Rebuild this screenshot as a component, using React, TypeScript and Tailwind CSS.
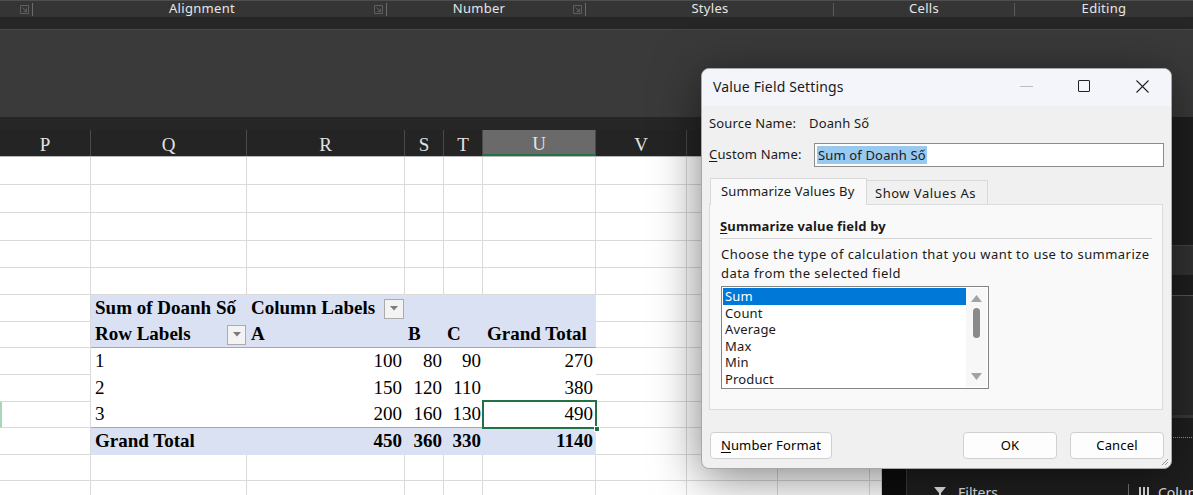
import React from "react"

const cols = [
  { id: "P", w: "w-[91px]" },
  { id: "Q", w: "w-[156px]" },
  { id: "R", w: "w-[158px]" },
  { id: "S", w: "w-[39px]" },
  { id: "T", w: "w-[39px]" },
  { id: "U", w: "w-[113px]" },
  { id: "V", w: "w-[91px]" },
  { id: "W", w: "w-[91px]" },
  { id: "X", w: "w-[92px]" },
  { id: "Y", w: "w-[12px]" },
]

const rowHeights = [
  "h-[28px]", "h-[28px]", "h-[28px]", "h-[27px]", "h-[27px]", "h-[27px]", "h-[26px]",
  "h-[27px]", "h-[27px]", "h-[26px]", "h-[27px]", "h-[26px]", "h-[27px]",
]

const pivotData = [
  { label: "1", a: 100, b: 80, c: 90, t: 270 },
  { label: "2", a: 150, b: 120, c: 110, t: 380 },
  { label: "3", a: 200, b: 160, c: 130, t: 490 },
]

function Launcher() {
  return (
    <svg width="9" height="9" viewBox="0 0 9 9" className="shrink-0">
      <path d="M0.5 0.5h8v8h-8z" fill="none" stroke="#5e5e5e" />
      <path d="M2.5 2.5l4 4M6.5 3.5v3h-3" fill="none" stroke="#5e5e5e" />
    </svg>
  )
}

function Ribbon() {
  return (
    <div className="h-[117px] flex flex-col">
      <div className="h-[17px] flex bg-[#353535] border-t border-[#4e4e4e] text-[13px] leading-[14px] tracking-[0.3px] text-[#e6e6e6] font-['Noto_Sans',sans-serif]">
        <div className="w-[34px] flex items-center justify-end gap-[3px] pr-[1px]">
          <Launcher />
          <div className="w-px h-[13px] bg-[#6a6a6a]" />
        </div>
        <div className="w-[354px] flex items-center">
          <div className="flex-1 text-center pr-[4px] -mt-[2px]">Alignment</div>
          <Launcher />
          <div className="w-px h-[13px] bg-[#6a6a6a] ml-[3px] mr-[1px]" />
        </div>
        <div className="w-[199px] flex items-center">
          <div className="flex-1 text-center pr-[3px] -mt-[2px]">Number</div>
          <Launcher />
          <div className="w-px h-[13px] bg-[#6a6a6a] ml-[3px] mr-[1px]" />
        </div>
        <div className="w-[247px] flex items-center">
          <div className="flex-1 text-center -mt-[2px]">Styles</div>
          <div className="w-px h-[13px] bg-[#5a5a5a]" />
        </div>
        <div className="w-[181px] flex items-center">
          <div className="flex-1 text-center -mt-[2px]">Cells</div>
          <div className="w-px h-[13px] bg-[#5a5a5a]" />
        </div>
        <div className="flex-1 flex items-center">
          <div className="flex-1 text-center -mt-[2px]">Editing</div>
        </div>
      </div>
      <div className="h-[13px] bg-[#262626] border-b border-[#474747]" />
      <div className="flex-1 bg-[#3a3a3a]" />
    </div>
  )
}

function Dropdown({ size }: { size: string }) {
  return (
    <div className={`${size} shrink-0 border border-[#ababab] bg-[#f3f3f3] flex items-center justify-center`}>
      <svg width="8" height="5" viewBox="0 0 8 5">
        <path d="M0 0h8L4 4.5z" fill="#7b7b7b" />
      </svg>
    </div>
  )
}

function PivotRow({ idx }: { idx: number }) {
  const base = "flex shrink-0 w-[505px] font-['Liberation_Serif',serif] text-[19px] text-black"
  const cell = "h-full flex items-center shrink-0 whitespace-nowrap"
  if (idx === 5) {
    return (
      <div className={`${base} bg-[#d9e1f2] font-bold`}>
        <div className={`${cell} w-[156px] pl-[4px]`}>Sum of Doanh Số</div>
        <div className={`${cell} w-[158px] pl-[4px] pr-[1px] justify-between`}>
          <span>Column Labels</span>
          <Dropdown size="w-[20px] h-[20px]" />
        </div>
        <div className="flex-1" />
      </div>
    )
  }
  if (idx === 6) {
    return (
      <div className={`${base} bg-[#d9e1f2] font-bold border-b border-[#8ea9db]`}>
        <div className={`${cell} w-[156px] pl-[4px] pr-[1px] justify-between`}>
          <span>Row Labels</span>
          <Dropdown size="w-[19px] h-[20px]" />
        </div>
        <div className={`${cell} w-[158px] pl-[4px]`}>A</div>
        <div className={`${cell} w-[39px] pl-[3px]`}>B</div>
        <div className={`${cell} w-[39px] pl-[3px]`}>C</div>
        <div className={`${cell} w-[113px] pl-[4px]`}>Grand Total</div>
      </div>
    )
  }
  if (idx >= 7 && idx <= 9) {
    const d = pivotData[idx - 7]
    return (
      <div className={`${base} bg-white ${idx === 9 ? "border-b border-[#8ea9db]" : ""}`}>
        <div className={`${cell} w-[156px] pl-[4px]`}>{d.label}</div>
        <div className={`${cell} w-[158px] pr-[3px] justify-end`}>{d.a}</div>
        <div className={`${cell} w-[39px] pr-[2px] justify-end`}>{d.b}</div>
        <div className={`${cell} w-[39px] pr-[2px] justify-end`}>{d.c}</div>
        <div className={`${cell} relative w-[113px] pr-[3px] justify-end`}>
          {d.t}
          {idx === 9 && (
            <div className="absolute left-[-1px] top-[-2px] w-[115px] h-[29px] border-2 border-[#217346]">
              <div className="absolute right-[-5px] bottom-[-5px] w-[6px] h-[6px] bg-[#217346] border border-white" />
            </div>
          )}
        </div>
      </div>
    )
  }
  return (
    <div className={`${base} bg-[#d9e1f2] font-bold`}>
      <div className={`${cell} w-[156px] pl-[4px]`}>Grand Total</div>
      <div className={`${cell} w-[158px] pr-[3px] justify-end`}>450</div>
      <div className={`${cell} w-[39px] pr-[2px] justify-end`}>360</div>
      <div className={`${cell} w-[39px] pr-[2px] justify-end`}>330</div>
      <div className={`${cell} w-[113px] pr-[3px] justify-end`}>1140</div>
    </div>
  )
}

function Sheet() {
  return (
    <div className="w-[882px] shrink-0 flex flex-col bg-white">
      <div className="h-[13px] bg-[#262626]" />
      <div className="flex h-[27px] bg-[#242424] border-b border-[#b8b8b8] font-['Liberation_Serif',serif] text-[19px] text-[#e2e2e2]">
        {cols.map((c) => (
          <div
            key={c.id}
            className={`${c.w} shrink-0 flex items-center justify-center pt-[4px] border-r border-[#4a4a4a] ${
              c.id === "U" ? "bg-[#6a6a6a] border-b-2 border-b-[#217346]" : ""
            }`}
          >
            {c.id}
          </div>
        ))}
      </div>
      {rowHeights.map((h, idx) => {
        const pivot = idx >= 5 && idx <= 10
        return (
          <div key={idx} className={`${h} flex shrink-0`}>
            <div
              className={`w-[91px] shrink-0 border-r border-b border-[#dadada] ${
                idx === 9 ? "border-l-2 border-l-[#a7d7b5]" : ""
              }`}
            />
            {pivot ? (
              <PivotRow idx={idx} />
            ) : (
              cols.slice(1, 6).map((c) => (
                <div key={c.id} className={`${c.w} shrink-0 border-r border-b border-[#dadada]`} />
              ))
            )}
            {cols.slice(6).map((c) => (
              <div key={c.id} className={`${c.w} shrink-0 border-r border-b border-[#dadada]`} />
            ))}
          </div>
        )
      })}
    </div>
  )
}

function SidePane() {
  return (
    <div className="flex-1 flex">
      <div className="w-[25px] bg-[#0d0d0d] border-r border-[#3a3a3a]" />
      <div className="flex-1 flex flex-col bg-[#1f1f1f]">
        <div className="h-[128px]" />
        <div className="h-[30px] bg-[#333333] border-t border-[#444]" />
        <div className="h-[20px]" />
        <div className="h-[120px] bg-[#2a2a2a] border-t border-[#575757]" />
        <div className="h-[3px] bg-[#3a3a3a]" />
        <div className="h-[52px] pt-[19px]">
          <div className="border-t border-dotted border-[#9a9a9a]" />
        </div>
        <div className="flex-1 flex text-[14px] leading-[18px] text-[#e6e6e6] font-['Noto_Sans',sans-serif] pt-[14px]">
          <div className="w-[221px] flex items-start pl-[27px] gap-[12px]">
            <svg width="12" height="12" viewBox="0 0 12 12" className="mt-[3px]">
              <path d="M0 0h12L7 6v6H5V6z" fill="#e6e6e6" />
            </svg>
            <span>Filters</span>
          </div>
          <div className="w-px h-[20px] bg-[#777]" />
          <div className="flex items-start pl-[9px] gap-[8px]">
            <svg width="12" height="12" viewBox="0 0 12 12" className="mt-[3px]">
              <path d="M1 0h2v12H1zM5 0h2v12H5zM9 0h2v12H9z" fill="#e6e6e6" />
            </svg>
            <span>Columns</span>
          </div>
        </div>
      </div>
    </div>
  )
}

function Dialog() {
  const btn =
    "h-[27px] rounded-[4px] bg-[#fdfdfd] border border-[#d0d0d0] flex items-center justify-center text-[13px] text-black"
  return (
    <div className="absolute left-[701px] top-[68px] w-[471px] h-[401px] rounded-[8px] border border-[#a8a8a8] bg-[#f0f0f0] shadow-[0_8px_48px_rgba(0,0,0,0.5)] overflow-hidden font-['Noto_Sans',sans-serif] text-[13px] tracking-[0.15px] text-[#1a1a1a]">
      <div className="h-[37px] bg-[#f3f5fa] flex items-center pl-[11px] pb-[3px]">
        <span className="text-[14px] flex-1">Value Field Settings</span>
        <div className="w-[58px] flex justify-center">
          <div className="w-[13px] h-px bg-[#bdbdbd]" />
        </div>
        <div className="w-[58px] flex justify-center">
          <div className="w-[12px] h-[12px] border border-[#222] rounded-[1px]" />
        </div>
        <div className="w-[58px] flex justify-center">
          <svg width="13" height="13" viewBox="0 0 13 13">
            <path d="M0.5 0.5l12 12M12.5 0.5l-12 12" stroke="#222" strokeWidth="1.1" />
          </svg>
        </div>
      </div>
      <div className="px-[7px]">
        <div className="flex items-center h-[22px] mt-[7px]">
          <span className="w-[100px]">Source Name:</span>
          <span>Doanh Số</span>
        </div>
        <div className="flex items-center mt-[8px]">
          <span className="w-[105px] whitespace-nowrap">
            <span className="underline underline-offset-2">C</span>ustom Name:
          </span>
          <div className="w-[350px] h-[24px] bg-white border border-[#8c8c8c] flex items-center pl-[2px]">
            <span className="bg-[#99c9ef] px-[1px] leading-[18px] whitespace-nowrap">Sum of Doanh Số</span>
          </div>
        </div>
        <div className="flex items-end mt-[11px] pl-[1px]">
          <div className="w-[157px] h-[27px] bg-[#f9f9f9] border border-b-0 border-[#d9d9d9] flex items-center pl-[10px] relative z-10 -mb-px">
            Summarize Values By
          </div>
          <div className="w-[121px] h-[24px] bg-[#f0f0f0] border border-l-0 border-b-0 border-[#d9d9d9] flex items-center pl-[8px] pt-[2px] tracking-[0.5px]">
            Show Values As
          </div>
        </div>
        <div className="w-[454px] h-[206px] bg-[#f9f9f9] border border-[#dcdcdc] px-[10px] pt-[12px]">
          <div className="font-bold border-b border-[#d4d4d4] pb-[3px] leading-[18px]">
            <span className="underline underline-offset-2">S</span>ummarize value field by
          </div>
          <div className="mt-[6px] leading-[19px] pl-[1px] tracking-[0.45px] whitespace-nowrap">
            Choose the type of calculation that you want to use to summarize
            <br />
            data from the selected field
          </div>
          <div className="mt-[3px] ml-[1px] w-[268px] h-[103px] bg-white border border-[#848484] flex p-[1px]">
            <div className="flex-1 leading-[16.5px]">
              {["Sum", "Count", "Average", "Max", "Min", "Product"].map((it, i) => (
                <div key={it} className={`pl-[2px] ${i === 0 ? "bg-[#0078d7] text-white" : ""}`}>
                  {it}
                </div>
              ))}
            </div>
            <div className="w-[21px] flex flex-col items-center bg-[#f7f7f7] pt-[7px]">
              <svg width="11" height="7" viewBox="0 0 11 7">
                <path d="M5.5 0L11 7H0z" fill="#a3a3a3" />
              </svg>
              <div className="w-[7px] h-[30px] rounded-full bg-[#8a8a8a] mt-[6px]" />
              <div className="flex-1" />
              <svg width="11" height="7" viewBox="0 0 11 7" className="mb-[7px]">
                <path d="M0 0h11L5.5 7z" fill="#a3a3a3" />
              </svg>
            </div>
          </div>
        </div>
        <div className="flex items-center mt-[22px] pl-[1px]">
          <div className={`${btn} w-[122px]`}>
            <span className="underline underline-offset-2">N</span>umber Format
          </div>
          <div className="flex-1" />
          <div className={`${btn} w-[94px] border-[#0067c0]`}>OK</div>
          <div className={`${btn} w-[94px] ml-[13px]`}>Cancel</div>
        </div>
      </div>
      <svg width="8" height="8" viewBox="0 0 8 8" className="absolute right-[2px] bottom-[2px]">
        <path d="M7 1L1 7M7 4L4 7" stroke="#9a9a9a" />
      </svg>
    </div>
  )
}

export default function App() {
  return (
    <div className="relative w-[1193px] h-[495px] overflow-hidden bg-[#1f1f1f]">
      <Ribbon />
      <div className="flex">
        <Sheet />
        <SidePane />
      </div>
      <Dialog />
    </div>
  )
}
